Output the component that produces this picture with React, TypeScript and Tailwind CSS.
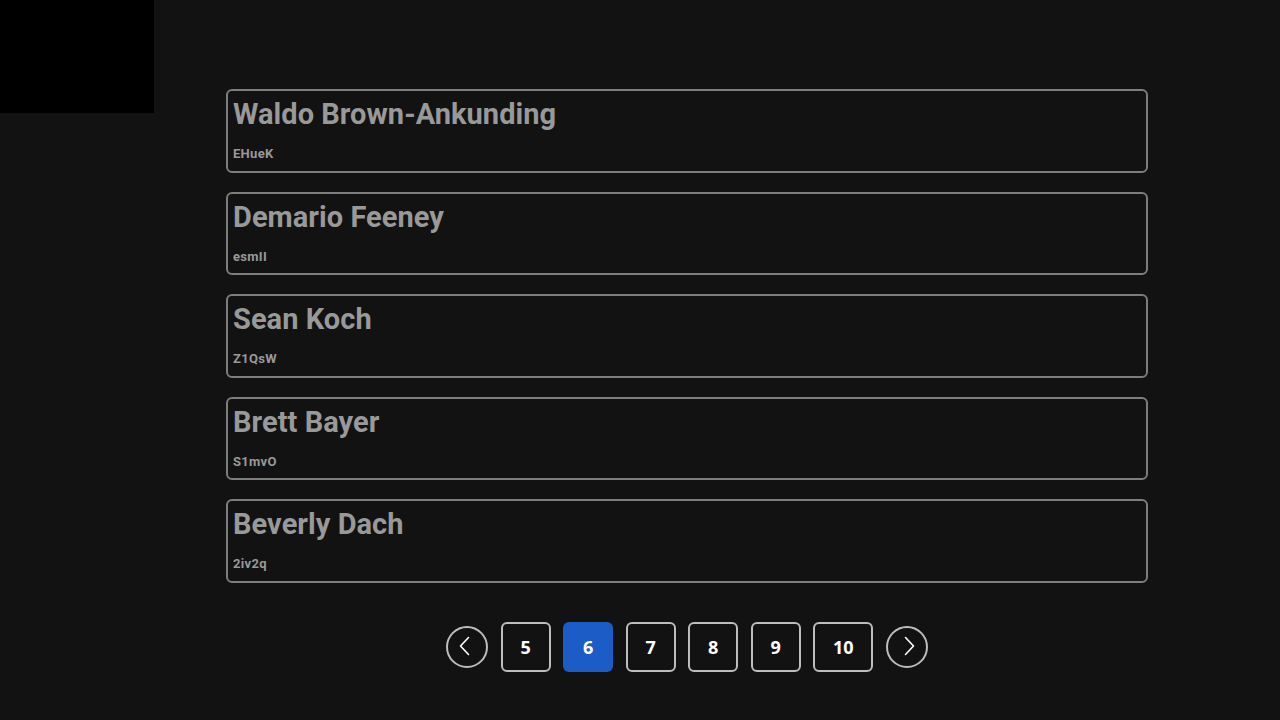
const people = [
  { name: "Waldo Brown-Ankunding", code: "EHueK" },
  { name: "Demario Feeney", code: "esmII" },
  { name: "Sean Koch", code: "Z1QsW" },
  { name: "Brett Bayer", code: "S1mvO" },
  { name: "Beverly Dach", code: "2iv2q" },
];

const pages = [5, 6, 7, 8, 9, 10];

function Chevron({ dir }: { dir: "left" | "right" }) {
  return (
    <svg width="22" height="22" viewBox="0 0 22 22" fill="none" stroke="currentColor" strokeWidth="1.6" strokeLinecap="round" strokeLinejoin="round">
      {dir === "left" ? <polyline points="13.5,2.5 5.5,11 13.5,19.5" /> : <polyline points="8.5,2.5 16.5,11 8.5,19.5" />}
    </svg>
  );
}

export default function App() {
  return (
    <div className="relative min-h-[720px] w-full bg-[#121212] font-['Roboto',sans-serif]">
      <div className="absolute left-0 top-0 h-[113px] w-[154px] bg-black" />

      <div className="ml-[226px] w-[922px] pt-[89px]">
        <div className="flex flex-col gap-[19px]">
          {people.map((p) => (
            <div
              key={p.code}
              className="h-[83.5px] rounded-[6px] border-2 border-[#7d7d7d] px-[5px] pt-[3px]"
            >
              <div className="text-[29px] font-bold leading-[40px] tracking-[0.05px] text-[#999999]">
                {p.name}
              </div>
              <div className="mt-[12px] text-[13px] font-bold leading-[16px] tracking-[0.3px] text-[#999999]">
                {p.code}
              </div>
            </div>
          ))}
        </div>

        <div className="mt-[39.5px] flex items-center justify-center gap-[12.5px] font-['Open_Sans',sans-serif]">
          <button className="flex h-[42px] w-[42px] items-center justify-center rounded-full border-2 border-[#bdbdbd] pb-[2px] pr-[2px] text-white">
            <Chevron dir="left" />
          </button>
          {pages.map((n) => (
            <button
              key={n}
              className={
                n === 6
                  ? "flex h-[50px] w-[50px] items-center justify-center rounded-[6px] bg-[#1b5cc6] text-[18px] font-bold text-white"
                  : n === 10
                  ? "flex h-[50px] w-[60px] items-center justify-center rounded-[6px] border-2 border-[#bdbdbd] text-[18px] font-bold text-white"
                  : "flex h-[50px] w-[50px] items-center justify-center rounded-[6px] border-2 border-[#bdbdbd] text-[18px] font-bold text-white"
              }
            >
              {n}
            </button>
          ))}
          <button className="flex h-[42px] w-[42px] items-center justify-center rounded-full border-2 border-[#bdbdbd] pb-[2px] pl-[2px] text-white">
            <Chevron dir="right" />
          </button>
        </div>
      </div>
    </div>
  );
}
